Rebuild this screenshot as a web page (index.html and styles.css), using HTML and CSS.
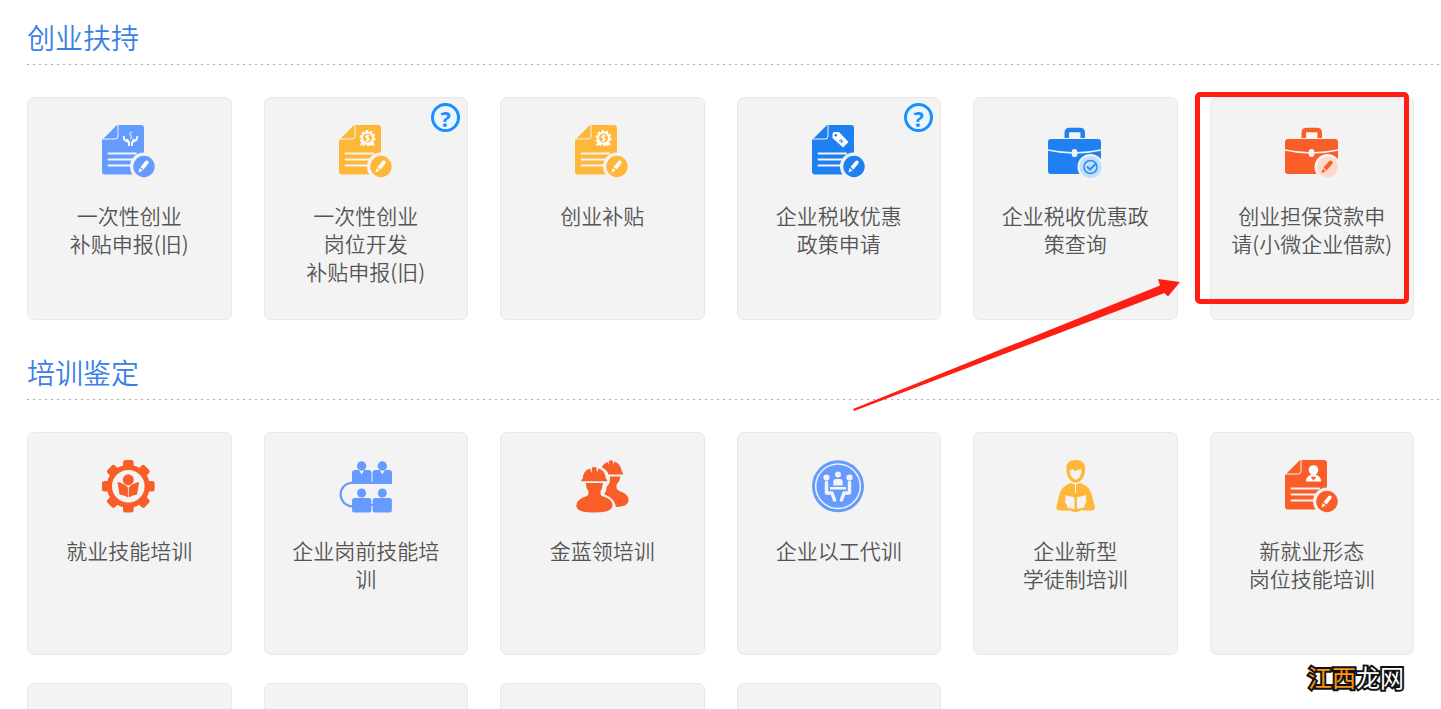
FILE: index.html
```html
<!DOCTYPE html>
<html lang="zh-CN">
<head>
<meta charset="utf-8">
<meta name="viewport" content="width=device-width, initial-scale=1">
<title>创业扶持</title>
<link rel="stylesheet" href="styles.css">
</head>
<body>
<svg class="sprite" aria-hidden="true">
  <symbol id="doc" viewBox="0 0 54 54">
    <path fill="currentColor" d="M15 1H39Q42 1 42 4V47.500Q42 50.500 39 50.500H3Q0 50.500 0 47.500V16Z"/>
    <path class="cut-line thin" d="M16 1V12Q16 15 13 15H1"/>
    <path class="cut-line mid" d="M6.500 29.500H34M6.500 35.500H30M6.500 41.500H29"/>
    <circle class="cut" cx="42" cy="42.500" r="14"/>
    <circle fill="currentColor" cx="42" cy="42.500" r="10.700"/>
    <path class="white" d="M38.500 43L43.800 36.800Q44.800 36 46 37Q47.300 38 46.500 39.200L41.500 45.500ZM37.700 44L40.600 46.600L36.500 48.400Z"/>
  </symbol>
  <symbol id="seal" viewBox="0 0 54 54">
    <circle class="white-line" cx="28.500" cy="14" r="5.500" stroke-width="2"/>
    <circle class="white-line" cx="28.500" cy="14" r="7" stroke-width="1.800" stroke-dasharray="2.600 1.800"/>
    <path class="white" d="M23 17L21 21.500L24 21L26 22L27 19ZM34 17L36 21.500L33 21L31 22L30 19Z"/>
    <path class="white-line" stroke-width="1.200" d="M30.500 11.800H28Q26.500 12 27 13.500L30 14.500Q30.500 16.500 28 16.500H26.500M28.500 10.500V18"/>
  </symbol>
  <symbol id="case" viewBox="0 0 54 54">
    <path fill="none" stroke="currentColor" stroke-width="4.500" d="M18.800 14V8.500Q18.800 6 21.500 6H32Q34.700 6 34.700 8.500V14"/>
    <rect fill="currentColor" y="15" width="53" height="35" rx="3"/>
    <path class="cut-line thin2" d="M0 26Q26.500 32 53 26"/>
    <rect class="cut" x="23.800" y="25" width="5.500" height="8" rx="2.500"/>
    <path class="cut" d="M54 33V54H40Z"/>
    <circle class="cut" cx="42.500" cy="43" r="13"/>
  </symbol>
</svg>

<main class="page">
  <section class="group">
    <h2 class="title">创业扶持</h2>
    <ul class="grid">
      <li class="cell"><a class="card" href="#">
        <svg class="icon sky" viewBox="0 0 54 54" aria-hidden="true"><use href="#doc"/>
          <path class="white-line" stroke-width="1.800" d="M27 22V18.500L22.500 16L21.500 12M30 22V18.500L34.500 16L35.500 12M24.500 15L27 18M32.500 15L30 18"/>
          <path class="pale-line" d="M30 8Q27 9 28.500 11Q31 13 28 15"/>
        </svg>
        <span class="label">一次性创业<br>补贴申报(旧)</span></a></li>
      <li class="cell"><a class="card" href="#">
        <svg class="icon amber" viewBox="0 0 54 54" aria-hidden="true"><use href="#doc"/><use href="#seal"/></svg>
        <span class="label">一次性创业<br>岗位开发<br>补贴申报(旧)</span></a>
        <button class="help" type="button" aria-label="帮助">?</button></li>
      <li class="cell"><a class="card" href="#">
        <svg class="icon amber" viewBox="0 0 54 54" aria-hidden="true"><use href="#doc"/><use href="#seal"/></svg>
        <span class="label">创业补贴</span></a></li>
      <li class="cell"><a class="card" href="#">
        <svg class="icon blue" viewBox="0 0 54 54" aria-hidden="true"><use href="#doc"/>
          <path class="white" d="M20.500 9.500L22 8H27L36 17.500Q36.500 18 36 18.500L31.500 23Q31 23.500 30.500 23L20.500 14Z"/>
          <circle fill="currentColor" cx="23.800" cy="11.300" r="1.300"/>
          <path fill="none" stroke="currentColor" stroke-width="1" d="M27 17L29.500 15.500L29 18.500L31.500 17"/>
        </svg>
        <span class="label">企业税收优惠<br>政策申请</span></a>
        <button class="help" type="button" aria-label="帮助">?</button></li>
      <li class="cell"><a class="card" href="#">
        <svg class="icon blue" viewBox="0 0 54 54" aria-hidden="true"><use href="#case"/>
          <circle fill="#bfe0ff" cx="42.500" cy="43" r="11"/>
          <circle fill="none" stroke="#2f8bf0" stroke-width="1.500" cx="42.500" cy="43" r="6.500"/>
          <path fill="none" stroke="#2f8bf0" stroke-width="2" d="M39 42.500L42 45.500L48 39.500"/>
        </svg>
        <span class="label">企业税收优惠政策查询</span></a></li>
      <li class="cell"><a class="card" href="#">
        <svg class="icon orange" viewBox="0 0 54 54" aria-hidden="true"><use href="#case"/>
          <circle fill="#ffd9cc" cx="42.500" cy="43" r="10.500"/>
          <path fill="currentColor" d="M38.500 43.500L44.300 37Q45.500 36 47 37.200Q48.400 38.500 47.400 39.700L41.500 46.500ZM37.800 44.500L40.700 47.300L36.500 49Z"/>
        </svg>
        <span class="label">创业担保贷款申请(小微企业借款)</span></a>
        <span class="marker"></span>
        <svg class="arrow" viewBox="0 0 332 136" aria-hidden="true"><path d="M3 133L310 9.500L308 3L330 6L318 20.500L314.500 17L4 135Z"/></svg>
      </li>
    </ul>
  </section>

  <section class="group">
    <h2 class="title">培训鉴定</h2>
    <ul class="grid">
      <li class="cell"><a class="card" href="#">
        <svg class="icon orange" viewBox="0 0 54 54" aria-hidden="true">
          <g fill="currentColor">
            <circle cx="26.300" cy="27.300" r="21.500"/>
            <rect x="21" y="1" width="10.600" height="52.600" rx="2.500"/>
            <rect x="21" y="1" width="10.600" height="52.600" rx="2.500" transform="rotate(45 26.300 27.300)"/>
            <rect x="21" y="1" width="10.600" height="52.600" rx="2.500" transform="rotate(90 26.300 27.300)"/>
            <rect x="21" y="1" width="10.600" height="52.600" rx="2.500" transform="rotate(135 26.300 27.300)"/>
          </g>
          <circle class="cut" cx="26.300" cy="27.300" r="16.300"/>
          <g fill="currentColor">
            <circle cx="26.300" cy="20.800" r="5.500"/>
            <path d="M15.500 23Q22 24 25.900 28.500V38.500Q22 36 17.500 35.500ZM37.100 23Q30.600 24 26.700 28.500V38.500Q30.600 36 35.100 35.500Z"/>
          </g>
        </svg>
        <span class="label">就业技能培训</span></a></li>
      <li class="cell"><a class="card" href="#">
        <svg class="icon sky" viewBox="0 0 54 54" aria-hidden="true">
          <g fill="currentColor">
            <path d="M13 14Q13 11 16 11H20L22.600 15.500L25.200 11H29.500Q32.500 11 32.500 14V23H33.500V14Q33.500 11 36.500 11H40.700L43.300 15.500L45.900 11H50Q53 11 53 14V25H13Z"/>
            <circle cx="22.600" cy="7" r="4.700"/><circle cx="43.300" cy="7" r="4.700"/>
            <circle cx="22.600" cy="34" r="4.500"/><circle cx="43.300" cy="34" r="4.500"/>
            <rect x="13" y="39" width="19.300" height="14.500" rx="2.500"/><rect x="33.600" y="39" width="19.300" height="14.500" rx="2.500"/>
            <rect x="31" y="45" width="4" height="2"/>
          </g>
          <path fill="none" stroke="currentColor" stroke-width="2.200" d="M14 23.700C-2.500 24.500-2.500 46.500 14 47.500"/>
        </svg>
        <span class="label">企业岗前技能培训</span></a></li>
      <li class="cell"><a class="card" href="#">
        <svg class="icon orange" viewBox="0 0 54 54" aria-hidden="true">
          <g fill="currentColor">
            <path d="M27 8.500Q28 4.500 32.500 3L33.500 6L34 2Q36 .5 38 2L38.500 6L39.500 2.500Q46 5 47 13Q48.500 14 48 15.500H33.500Q32 10.500 27 8.500Z"/>
            <path d="M35 17.500H45.500Q45 22 41.500 25.500V29Q42 31.500 47 33Q54 36 53.600 42Q53 47.500 41 48Q39.500 39.500 29 35Q31.500 33 31.500 28Q35.500 24.500 35 17.500Z"/>
            <path d="M7.500 20Q8.500 11 15 9.500L16.500 14L17 8.500Q19 7.500 21.500 8.500L22 14L23.500 9.500Q30 11 31 20Q33 21 32 22.300H6.300Q5.500 21 7.500 20Z"/>
            <path d="M10.800 24H28Q27.500 29.500 25.500 32.500V35Q26 37 30 38Q38 41 37.500 47Q37 53.500 19 53.500Q1.500 53.500 1.300 47Q1.500 41 9 38Q13 37 13.500 35V32.500Q11 29.500 10.800 24Z"/>
          </g>
        </svg>
        <span class="label">金蓝领培训</span></a></li>
      <li class="cell"><a class="card" href="#">
        <svg class="icon sky" viewBox="0 0 54 54" aria-hidden="true">
          <circle fill="currentColor" cx="26" cy="27.300" r="26"/>
          <circle class="cut-line thin2" cx="26" cy="27.300" r="22.300"/>
          <g class="cut">
            <circle cx="26" cy="15.500" r="3"/><circle cx="14.500" cy="18.500" r="3.100"/><circle cx="37.500" cy="18.500" r="3.100"/>
            <path d="M21.300 26.500V23Q21.300 20 24 20H28Q30.700 20 30.700 23V26.500ZM18 28H34V30.500H18Z"/>
          </g>
          <path class="cut-line bold" d="M14.500 23.500V34H20L22.500 41M37.500 23.500V34H32L29.500 41"/>
        </svg>
        <span class="label">企业以工代训</span></a></li>
      <li class="cell"><a class="card" href="#">
        <svg class="icon amber" viewBox="0 0 54 54" aria-hidden="true">
          <path fill="currentColor" d="M18.500 9Q18.500 1 27.500 1Q37 1 37 9V13Q36 20 30 23.500H25Q19.500 20 18.500 13Z"/>
          <path class="cut" d="M21.500 11.500L24.500 10L26.500 12L33.500 10V13Q33 18 27.500 21Q21.500 17.500 21.500 11.500Z"/>
          <path fill="currentColor" d="M23 24Q27.500 26.500 32 24Q41 26.500 43.500 35L47 48Q47 51.500 43 51.500H33L27.500 53.500L22 51.500H12Q8 51.500 8.300 48L11.500 35Q14 26.500 23 24Z"/>
          <path class="cut" d="M17.300 36L26.500 38.500V50L19 48.500V46L17.300 44ZM38.200 36L29 38.500V50L36.500 48.500V46L38.200 44Z"/>
          <path class="cut-line thin" d="M27.500 25V34"/>
        </svg>
        <span class="label">企业新型<br>学徒制培训</span></a></li>
      <li class="cell"><a class="card" href="#">
        <svg class="icon orange" viewBox="0 0 54 54" aria-hidden="true"><use href="#doc"/>
          <circle class="white" cx="28.500" cy="11" r="4.800"/>
          <path class="white" d="M26 14H31V16Q36 17 36 22.500H21Q21 17 26 16Z"/>
          <path fill="currentColor" d="M28.500 21.500L26 18.500Q27 16.800 28.500 18Q30 16.800 31 18.500Z"/>
        </svg>
        <span class="label">新就业形态<br>岗位技能培训</span></a></li>
      <li class="cell"><a class="card" href="#" aria-hidden="true"></a></li>
      <li class="cell"><a class="card" href="#" aria-hidden="true"></a></li>
      <li class="cell"><a class="card" href="#" aria-hidden="true"></a></li>
      <li class="cell"><a class="card" href="#" aria-hidden="true"></a></li>
    </ul>
  </section>
  <p class="watermark"><span class="watermark-accent">江西</span>龙网</p>
</main>
</body>
</html>
```

FILE: styles.css
```css
* { box-sizing: border-box; }

body {
  margin: 0;
  background: #fff;
  color: #555;
  font-family: "Noto Sans CJK SC", sans-serif;
  font-weight: 350;
}

.sprite { position: absolute; width: 0; height: 0; }

.page {
  position: relative;
  height: 100vh;
  overflow: hidden;
}

.group { padding-left: 27px; }
.group + .group { padding-top: 15px; }

.title {
  margin: 0;
  padding: 15px 0 6px;
  color: #3a80e6;
  font-size: 28px;
  font-weight: 350;
  line-height: 44px;
  background: repeating-linear-gradient(90deg, #aaa 0 2px, transparent 2px 6px) left bottom / 100% 1px no-repeat;
}

.grid {
  display: grid;
  grid-template-columns: repeat(6, minmax(0, 1fr));
  grid-auto-rows: minmax(223px, auto);
  gap: 28px 32px;
  margin: 0;
  padding: 32px 27px 0 0;
  list-style: none;
}

.cell { position: relative; display: flex; }

.card {
  flex: 1;
  display: flex;
  flex-direction: column;
  align-items: center;
  gap: 23px;
  padding: 26px 19px;
  border: 1px solid #e8e8e8;
  border-radius: 7px;
  background: #f3f3f3;
  color: inherit;
  text-decoration: none;
}

.label {
  font-size: 21px;
  line-height: 28px;
  text-align: center;
}

.icon { width: 54px; height: 54px; overflow: visible; }
.sky { color: #659bff; }
.amber { color: #ffb73a; }
.blue { color: #1f81f1; }
.orange { color: #f95d28; }

.cut { fill: #f3f3f3; }
.cut-line { fill: none; stroke: #f3f3f3; }
.thin { stroke-width: 1; }
.thin2 { stroke-width: 1.5; }
.mid { stroke-width: 2; stroke-linecap: round; }
.bold { stroke-width: 3.5; stroke-linecap: round; stroke-linejoin: round; }
.white { fill: #fff; }
.white-line { fill: none; stroke: #fff; }
.pale-line { fill: none; stroke: #c5d9ff; stroke-width: 1.5; }

.help {
  position: absolute;
  top: 6px;
  right: 8px;
  width: 29px;
  height: 29px;
  padding: 0;
  border: 3px solid #1890ff;
  border-radius: 50%;
  background: #eef6fd;
  color: #1890ff;
  font: bold 22px/22px "Noto Sans", sans-serif;
  text-align: center;
}

.marker {
  position: absolute;
  inset: -5px 5px 16px -15px;
  border: 5px solid #ff1e14;
  border-radius: 5px;
  pointer-events: none;
}

.arrow {
  position: absolute;
  top: 179px;
  left: -360px;
  width: 332px;
  height: 136px;
  z-index: 1;
  fill: #ff1e14;
  pointer-events: none;
}

.watermark {
  position: absolute;
  right: 37px;
  bottom: 14px;
  margin: 0;
  color: #fff;
  font-size: 24px;
  font-weight: 400;
  line-height: 36px;
  -webkit-text-stroke: 4px #111;
  paint-order: stroke fill;
}
.watermark-accent { color: #ff9413; }
```
